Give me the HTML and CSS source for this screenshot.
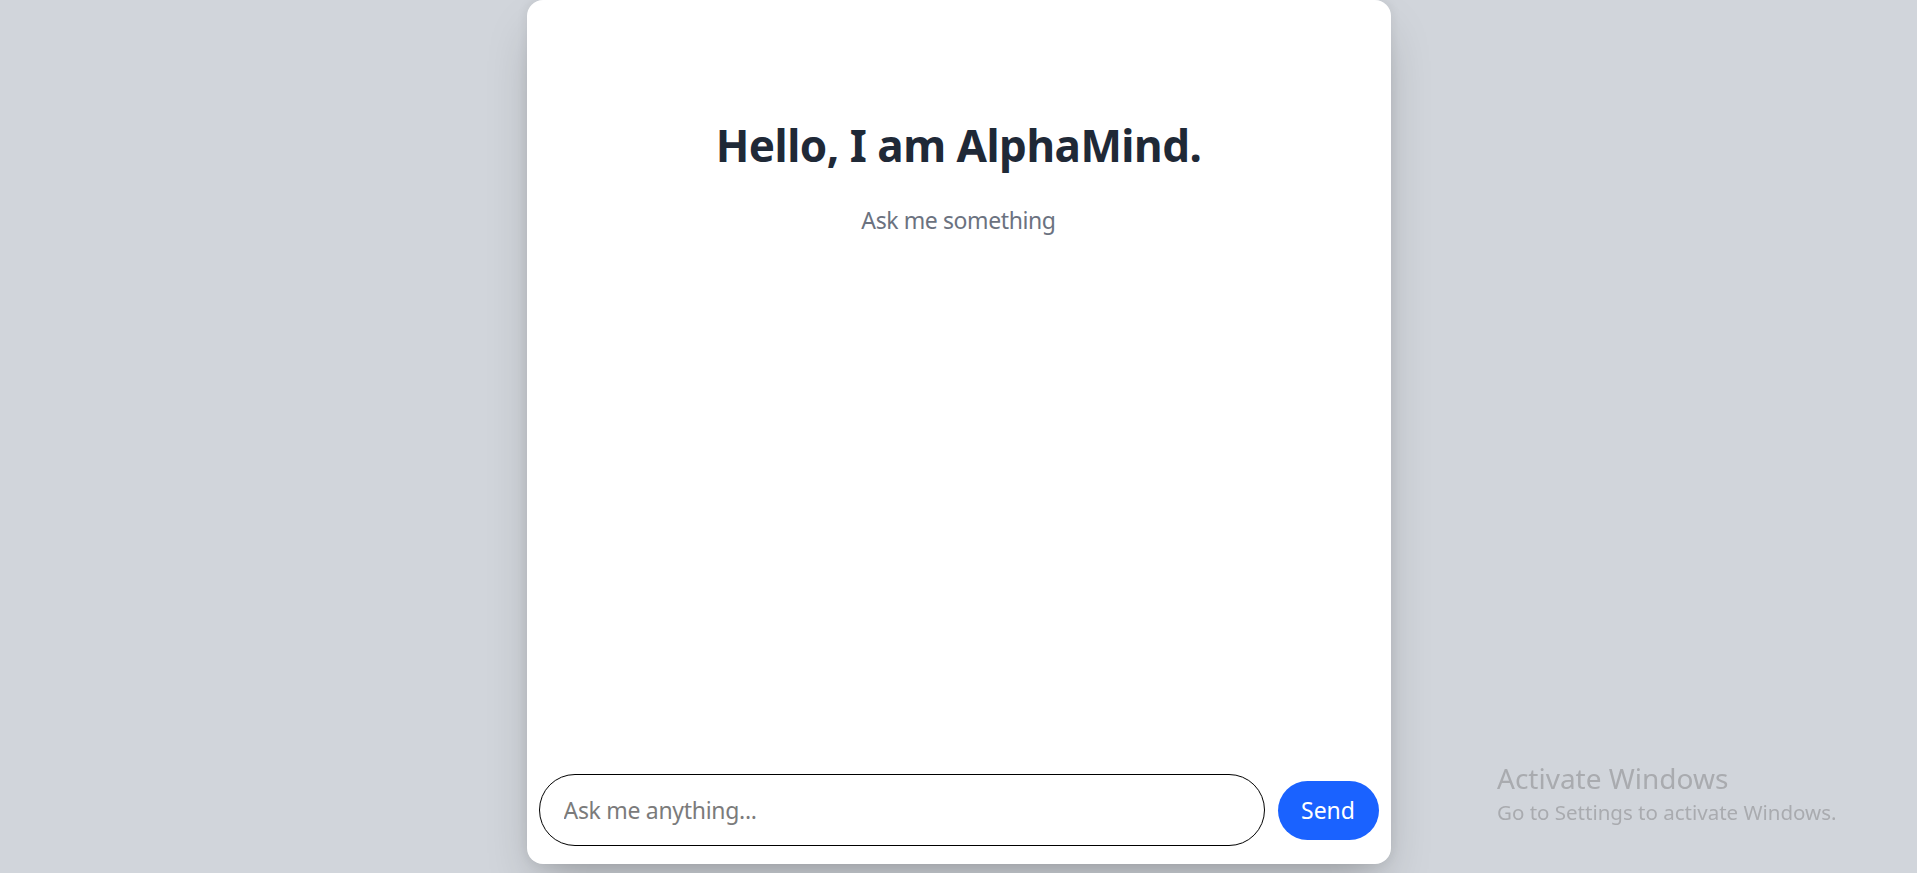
FILE: index.html
```html
<!DOCTYPE html>
<html lang="en">
<head>
<meta charset="utf-8">
<title>AlphaMind</title>
<link rel="stylesheet" href="styles.css">
</head>
<body>
<main class="card">
  <header class="intro">
    <h1 class="title">Hello, I am AlphaMind.</h1>
    <p class="subtitle">Ask me something</p>
  </header>
  <section class="messages"></section>
  <form class="composer">
    <input class="prompt" type="text" placeholder="Ask me anything...">
    <button class="send" type="button">Send</button>
  </form>
</main>
<div class="watermark">
  <div class="wm-title">Activate Windows</div>
  <div class="wm-sub">Go to Settings to activate Windows.</div>
</div>
</body>
</html>
```
FILE: styles.css
```css
* { box-sizing: border-box; }
html, body { height: 100%; }
body {
  margin: 0;
  background: #d1d5db;
  font-family: "Noto Sans", "Open Sans", sans-serif;
  display: flex;
  justify-content: center;
  align-items: flex-start;
  overflow: hidden;
}
.card {
  width: 864px;
  height: 864px;
  background: #fff;
  border-radius: 16px;
  box-shadow: 0 25px 50px -12px rgba(0,0,0,0.25), 0 0 12px rgba(0,0,0,0.08);
  display: flex;
  flex-direction: column;
}
.intro {
  text-align: center;
  padding-top: 117px;
}
.title {
  margin: 0;
  font-size: 44px;
  font-weight: 700;
  letter-spacing: -0.5px;
  color: #1f2937;
  line-height: 56px;
}
.subtitle {
  margin: 31px 0 0;
  font-size: 23px;
  letter-spacing: -0.4px;
  color: #6b7280;
  line-height: 32px;
}
.messages { flex: 1; }
.composer {
  display: flex;
  align-items: center;
  gap: 13px;
  padding: 0 12px 18px;
}
.prompt {
  flex: 1;
  height: 72px;
  border: 1px solid #000;
  border-radius: 9999px;
  padding: 0 24px;
  font-family: inherit;
  font-size: 23px;
  letter-spacing: -0.3px;
  color: #1f2937;
  outline: none;
}
.prompt::placeholder { color: #7b7b7b; }
.send {
  height: 59px;
  width: 101px;
  border: none;
  border-radius: 9999px;
  background: #1a62ff;
  color: #fff;
  font-family: inherit;
  font-size: 23px;
  padding: 0;
}
.watermark {
  position: fixed;
  left: 1497px;
  top: 760px;
  color: #a9abaf;
  font-family: "Noto Sans", sans-serif;
}
.wm-title { font-size: 28px; line-height: 36px; }
.wm-sub { font-size: 20.5px; line-height: 32px; }
```
